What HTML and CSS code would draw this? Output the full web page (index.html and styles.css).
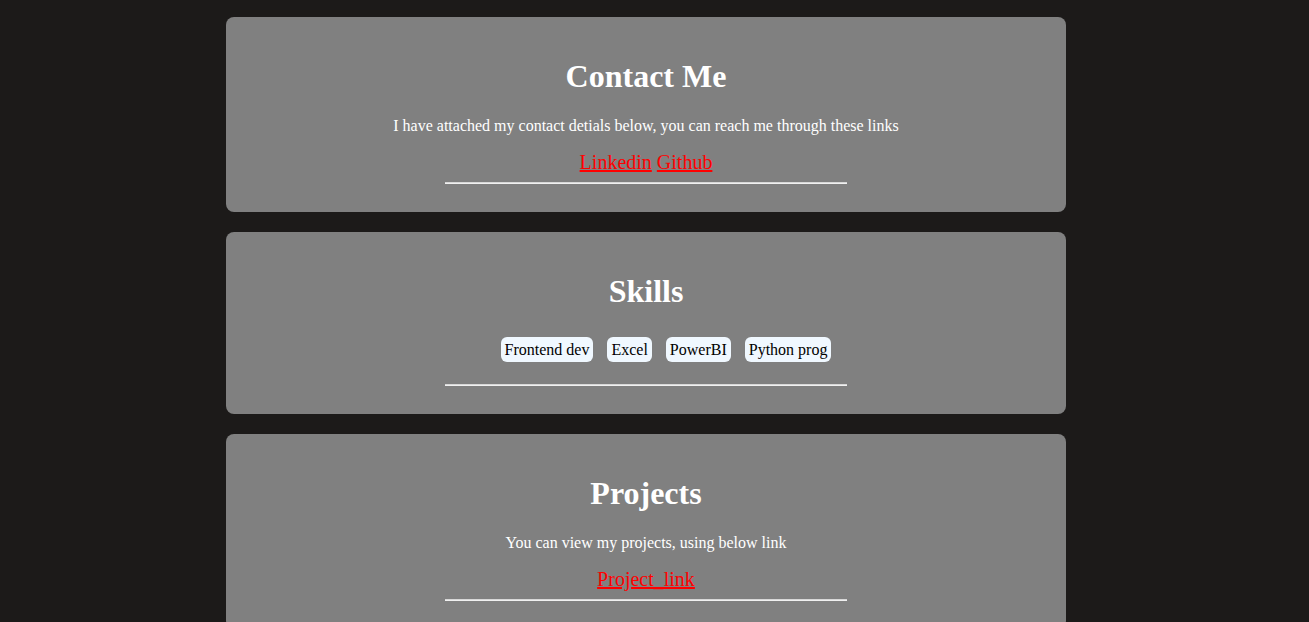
FILE: index.html
```html
<!DOCTYPE html>
<html lang="en">
<head>
<meta charset="utf-8">
<title>Portfolio</title>
<link rel="stylesheet" href="styles.css">
</head>
<body>
<main class="page">
  <section class="card">
    <h1 class="card-title">Contact Me</h1>
    <p class="card-text">I have attached my contact detials below, you can reach me through these links</p>
    <div class="links"><a href="#">Linkedin</a> <a href="#">Github</a></div>
    <hr class="rule">
  </section>
  <section class="card">
    <h1 class="card-title">Skills</h1>
    <ul class="skills">
      <li class="skill">Frontend dev</li>
      <li class="skill">Excel</li>
      <li class="skill">PowerBI</li>
      <li class="skill">Python prog</li>
    </ul>
    <hr class="rule">
  </section>
  <section class="card">
    <h1 class="card-title">Projects</h1>
    <p class="card-text">You can view my projects, using below link</p>
    <div class="links"><a href="#">Project_link</a></div>
    <hr class="rule">
  </section>
</main>
</body>
</html>
```
FILE: styles.css
```css
html, body {
  margin: 0;
  padding: 0;
}
body {
  background: #1c1a19;
  font-family: "Liberation Serif", "Times New Roman", serif;
  color: #ffffff;
  padding: 17px 17px 0 0;
}
.page {
  width: 840px;
  margin: 0 auto;
  display: flex;
  flex-direction: column;
  gap: 20px;
}
.card {
  background: #808080;
  border-radius: 8px;
  padding: 20px;
  text-align: center;
  display: flow-root;
}
.card-title {
  font-size: 32px;
  font-weight: bold;
  line-height: 37px;
  margin: 21px 0 22px;
}
.card-text {
  font-size: 16px;
  line-height: 18px;
  margin: 0 0 16px;
}
.links {
  font-size: 20px;
  line-height: 23px;
}
.links a {
  color: #ff0000;
}
.rule {
  width: 402px;
  margin: 8px auto;
  border: 0;
  border-top: 1px solid #d8d8d8;
  border-bottom: 1px solid #f0f0f0;
  height: 0;
}
.skills {
  list-style: none;
  display: flex;
  justify-content: center;
  gap: 14px;
  margin: 27px 0 22px;
  padding: 0 0 0 40px;
}
.skill {
  background: #f0f8ff;
  color: #000;
  font-size: 16px;
  line-height: 19px;
  padding: 3px 4px;
  border-radius: 6px;
}
```
